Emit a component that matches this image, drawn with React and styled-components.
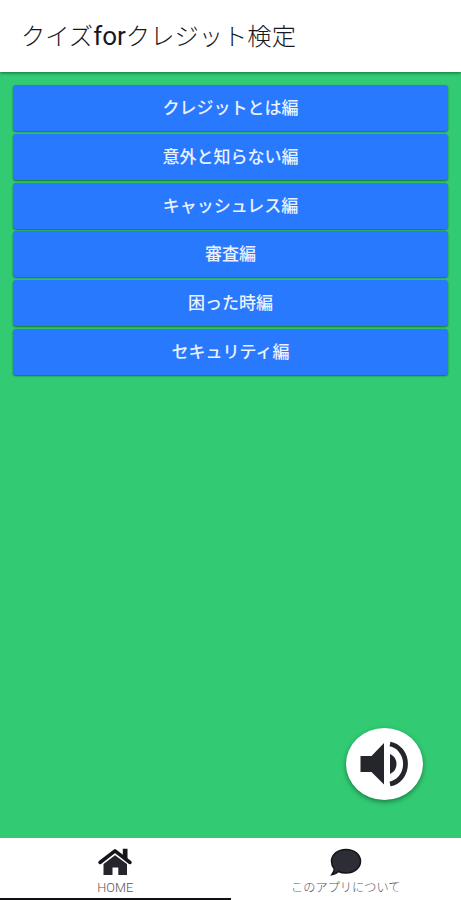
import React, { Component } from 'react';
import styled, { createGlobalStyle } from 'styled-components';

const GlobalStyle = createGlobalStyle`
  * {
    box-sizing: border-box;
  }
  body {
    margin: 0;
    font-family: Roboto, "Noto Sans CJK JP", sans-serif;
  }
`

const Page = styled.div`
  display: flex;
  flex-direction: column;
  width: 100%;
  height: 100vh;
  overflow: hidden;
  background: #32cb74;
`

const Header = styled.header`
  flex: none;
  display: flex;
  align-items: center;
  height: 72px;
  padding: 0 20px 0 21px;
  background: #fff;
  box-shadow: 0 1px 3px rgba(0, 60, 20, 0.65);
`

const Title = styled.h1`
  margin: 0;
  font-size: 24.3px;
  font-weight: 300;
  line-height: 36px;
  color: #17171c;
  white-space: nowrap;
`

const Latin = styled.span`
  font-size: 26px;
  font-weight: 400;
`

const Content = styled.main`
  flex: 1;
  display: flex;
  flex-direction: column;
  padding: 13px 13px 0;
`

const QuizList = styled.div`
  display: flex;
  flex-direction: column;
  gap: 2.75px;
`

const QuizButton = styled.button`
  height: 46px;
  padding: 0;
  border: none;
  border-radius: 3px;
  background: #2979ff;
  box-shadow: 0 1px 2px rgba(0, 60, 30, 0.65);
  color: #e9f1ff;
  font-family: inherit;
  font-size: 17px;
  font-weight: 500;
  line-height: 24px;
  cursor: pointer;
`

const SoundButton = styled.button`
  display: flex;
  align-items: center;
  justify-content: center;
  align-self: flex-end;
  width: 77px;
  height: 72px;
  margin: auto 25px 38px 0;
  padding: 0;
  border: none;
  border-radius: 50%;
  background: #fff;
  box-shadow: 0 2px 5px rgba(0, 50, 20, 0.5);
  cursor: pointer;
`

const TabBar = styled.nav`
  flex: none;
  display: flex;
  height: 62px;
  background: #fff;
`

const Tab = styled.div`
  flex: 1;
  display: flex;
  flex-direction: column;
  align-items: center;
  padding-top: 10px;
  border-bottom: 2px solid ${props => props.$active ? '#111114' : 'transparent'};
`

const TabLabel = styled.span`
  margin-top: 4px;
  font-size: ${props => props.$size}px;
  font-weight: 300;
  line-height: 16px;
  color: #55555a;
  white-space: nowrap;
`

const SoundIcon = () => (
  <svg width="50" height="46" viewBox="0 0 50 46" fill="#25252c">
    <path d="M0.500 15 H11.500 L24 2 V43.500 L11.500 31 H0.500 Z" />
    <path d="M30 13 Q36.500 16 36.500 23 Q36.500 30 30 33 Z" />
    <path d="M30 3 C38.500 4.500 45.500 12.500 45.500 23 C45.500 33.500 38.500 41.500 30 43" fill="none" stroke="#25252c" strokeWidth="4.800" />
  </svg>
)

const HomeIcon = () => (
  <svg width="36" height="28" viewBox="0 0 36 28" fill="#25252c">
    <path d="M3 14.500 L18 2.800 L33 14.500" fill="none" stroke="#15151a" strokeWidth="3.500" strokeLinecap="round" strokeLinejoin="round" />
    <path d="M25.800 0.800 H30.500 V12 L25.800 8.500 Z" fill="#15151a" />
    <path d="M18 7.200 L30 16 V27 H21.300 V19.500 H15.500 V27 H6.500 V16 Z" />
  </svg>
)

const CommentIcon = () => (
  <svg width="32" height="28" viewBox="0 0 32 28" fill="#2d2d35" stroke="#131318" strokeWidth="1.500">
    <path d="M16 1.500 C24.300 1.500 30.500 6.700 30.500 13.300 C30.500 20 24.300 25 16 25 C13.200 25 10.500 24.500 8.500 23.500 C6.500 25.500 4.200 26.600 1.800 26.700 C3.500 24.800 4.400 23 4.300 20.800 C2.400 18.700 1.500 16 1.500 13.300 C1.500 6.700 7.700 1.500 16 1.500 Z" />
  </svg>
)

const quizzes = [
  'クレジットとは編',
  '意外と知らない編',
  'キャッシュレス編',
  '審査編',
  '困った時編',
  'セキュリティ編'
]

class App extends Component {
  constructor(props){
    super(props);
    this.state = {
      tab: 'home'
    }
  }

  selectTab = (tab) => {
    this.setState({ tab });
  }

  render(){
    const { tab } = this.state;

    return (
      <Page>
        <GlobalStyle />
        <Header>
          <Title>クイズ<Latin>for</Latin>クレジット検定</Title>
        </Header>
        <Content>
          <QuizList>
            {quizzes.map(name => <QuizButton key={name}>{name}</QuizButton>)}
          </QuizList>
          <SoundButton>
            <SoundIcon />
          </SoundButton>
        </Content>
        <TabBar>
          <Tab $active={tab === 'home'} onClick={() => this.selectTab('home')}>
            <HomeIcon />
            <TabLabel $size={12.7}>HOME</TabLabel>
          </Tab>
          <Tab $active={tab === 'about'} onClick={() => this.selectTab('about')}>
            <CommentIcon />
            <TabLabel $size={12.2}>このアプリについて</TabLabel>
          </Tab>
        </TabBar>
      </Page>
    )
  }
}

export default App
